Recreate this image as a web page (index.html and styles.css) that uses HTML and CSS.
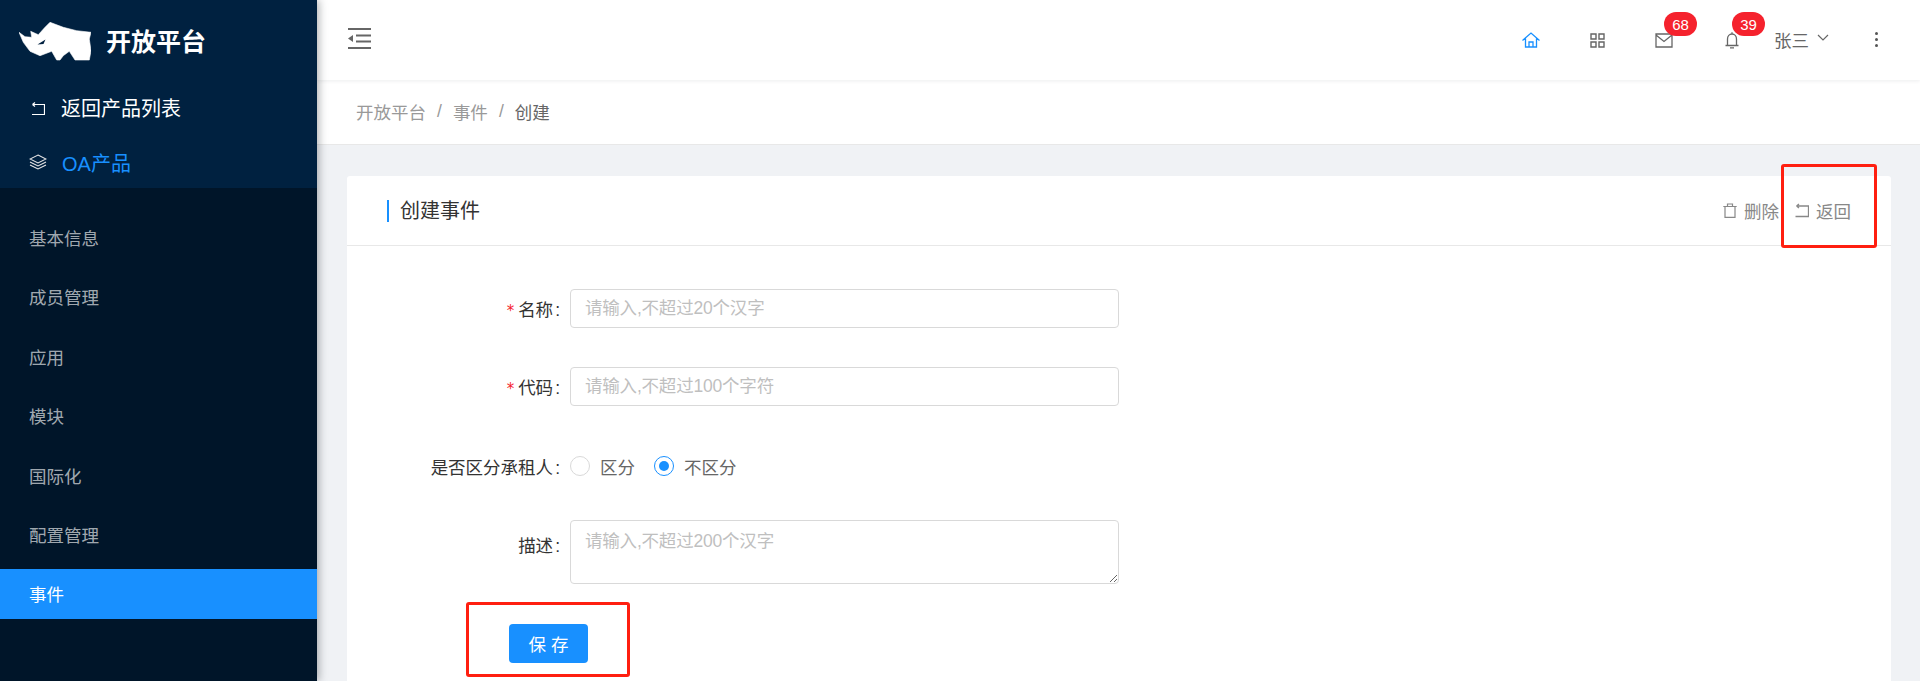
FILE: index.html
```html
<!DOCTYPE html>
<html lang="zh-CN">
<head>
<meta charset="utf-8">
<title>创建事件</title>
<link rel="stylesheet" href="styles.css">
</head>
<body>
<div class="app">
  <aside class="sider">
    <div class="sider-top">
      <div class="logo">
        <svg class="logo-img" viewBox="0 0 72 40"><path d="M0 10.300 L6 14.700 L12.700 15.300 L11.700 9.300 L19.300 12.700 L26 5.300 L31 .3 L44.300 5.300 L57.700 8.700 L72 10.300 L70.300 17 L72 28.700 L70.300 38 L56 38 L50.300 29.300 L44.300 33.700 L41 38 L37.700 38 L32.700 29.300 L21 33.700 L11 29.300 L4.300 20.300 Z" fill="#fff" stroke="#fff" stroke-width=".6" stroke-linejoin="round"/><path d="M18.500 22.500 L26.500 17.500 L24.500 22 Z" fill="#002140"/></svg>
        <span class="logo-text">开放平台</span>
      </div>
      <div class="back-row">
        <svg class="side-ico" viewBox="0 0 16 14"><path d="M3.500 2.500H15.500V12.500H3M3.500 2.500L6 .5M3.500 2.500L6 4.500" fill="none" stroke="#fff" stroke-width="1.200"/></svg>
        <span>返回产品列表</span>
      </div>
      <div class="product-row">
        <svg class="side-ico layers" viewBox="0 0 18 16"><path d="M9 1L17 5L9 9L1 5ZM1 8L9 12L17 8M1 11L9 15L17 11" fill="none" stroke="#e6e6e6" stroke-width="1.100"/></svg>
        <span>OA产品</span>
      </div>
    </div>
    <nav class="menu">
      <a class="menu-item">基本信息</a>
      <a class="menu-item">成员管理</a>
      <a class="menu-item">应用</a>
      <a class="menu-item">模块</a>
      <a class="menu-item">国际化</a>
      <a class="menu-item">配置管理</a>
      <a class="menu-item active">事件</a>
    </nav>
  </aside>
  <div class="main">
    <header class="header">
      <svg class="fold" viewBox="0 0 24 21"><path d="M0 1H23M8 7.500H23M8 13.500H23M0 20H23" stroke="#666" stroke-width="2" fill="none"/><path d="M0 10.500L5 7V14Z" fill="#666"/></svg>
      <div class="tools">
        <div class="tool t-home"><svg viewBox="0 0 18 16"><path d="M.5 8.500L9 1L17.500 8.500M3.500 6.500V15H14.500V6.500M7 15V10H11V15" fill="none" stroke="#1890ff" stroke-width="1.300"/></svg></div>
        <div class="tool t-apps"><svg viewBox="0 0 15 15"><path d="M1 1H6V6H1ZM9 1H14V6H9ZM1 9H6V14H1ZM9 9H14V14H9Z" fill="none" stroke="#666" stroke-width="1.400"/></svg></div>
        <div class="tool t-mail"><svg viewBox="0 0 18 15"><path d="M1 1H17V14H1ZM1 2L9 8.500L17 2" fill="none" stroke="#666" stroke-width="1.300"/></svg><span class="badge">68</span></div>
        <div class="tool t-bell"><svg viewBox="0 0 14 17"><path d="M.5 13.500H13.500M2.500 13.500V7C2.500 4 4.500 2 7 2C9.500 2 11.500 4 11.500 7V13.500M5 15.800H9M7 .3V2" fill="none" stroke="#666" stroke-width="1.300"/></svg><span class="badge">39</span></div>
        <div class="user"><span>张三</span><svg viewBox="0 0 12 7"><path d="M1 1L6 6L11 1" fill="none" stroke="#666" stroke-width="1.200"/></svg></div>
        <div class="more"><i></i><i></i><i></i></div>
      </div>
    </header>
    <div class="crumb">
      <span class="c-link">开放平台</span><span class="c-sep">/</span><span class="c-link">事件</span><span class="c-sep">/</span><span class="c-cur">创建</span>
    </div>
    <div class="content">
      <section class="card">
        <div class="card-head">
          <h2 class="card-title">创建事件</h2>
          <div class="actions">
            <span class="act"><svg viewBox="0 0 14 15"><path d="M.3 3.500H13.700M2 3.500V14.300H12V3.500M4.500 3.500V1H9.500V3.500" fill="none" stroke="#888" stroke-width="1.200"/></svg>删除</span>
            <span class="act"><svg viewBox="0 0 14 15"><path d="M1.500 3H13.500V13.500H.5M1.500 3L4 1M1.500 3L4 5" fill="none" stroke="#888" stroke-width="1.300"/></svg>返回</span>
          </div>
        </div>
        <form class="form">
          <div class="row r-name"><label class="lab req">名称</label><input class="inp" placeholder="请输入,不超过20个汉字"></div>
          <div class="row r-code"><label class="lab req">代码</label><input class="inp" placeholder="请输入,不超过100个字符"></div>
          <div class="row r-radio"><label class="lab">是否区分承租人</label>
            <div class="radios">
              <span class="radio"><i class="dot"></i>区分</span>
              <span class="radio on"><i class="dot"></i>不区分</span>
            </div>
          </div>
          <div class="row r-desc"><label class="lab">描述</label><textarea class="inp area" placeholder="请输入,不超过200个汉字"></textarea></div>
          <div class="submit"><button type="button" class="btn">保 存</button></div>
        </form>
        <div class="mark mark-back"></div>
        <div class="mark mark-save"></div>
      </section>
    </div>
  </div>
</div>
</body>
</html>
```
FILE: styles.css
```css
* { box-sizing: border-box; }
html, body { margin: 0; height: 681px; overflow: hidden; }
body { font-family: "Liberation Sans", "Noto Sans CJK SC", sans-serif; font-size: 16px; color: #333; background: #f0f2f5; }
.app { display: flex; height: 681px; }
.sider { width: 317px; flex: none; background: #001529; box-shadow: 2px 0 8px rgba(29,35,41,.35); position: relative; z-index: 2; }
.sider-top { height: 188px; background: #002140; }
.logo { height: 84px; display: flex; align-items: center; padding-left: 19px; }
.logo-img { width: 72px; height: 40px; margin-right: 15px; }
.logo-text { color: #fff; font-size: 25px; font-weight: 700; margin-top: -4px; }
.back-row, .product-row { display: flex; align-items: center; padding-left: 29px; font-size: 20px; line-height: 30px; }
.back-row { color: #fff; height: 50px; margin-top: 0; }
.product-row { color: #1890ff; height: 52px; margin-top: 4px; }
.side-ico { width: 16px; height: 14px; margin-right: 16px; flex: none; }
.layers { width: 18px; height: 16px; margin-right: 15px; margin-top: -4px; }
.menu { padding-top: 24.600px; display: flex; flex-direction: column; gap: 9.400px; }
.menu-item { display: flex; align-items: center; height: 50px; padding-left: 29px; font-size: 17.500px; color: rgba(255,255,255,.65); }
.menu-item.active { background: #1890ff; color: #fff; }
.main { flex: 1; min-width: 0; display: flex; flex-direction: column; min-height: 0; }
.header { flex: none; height: 80px; background: #fff; display: flex; align-items: center; justify-content: space-between; padding: 0 42px 0 31px; box-shadow: 0 1px 4px rgba(0,21,41,.08); position: relative; z-index: 1; }
.fold { width: 24px; height: 21px; margin-top: -3px; }
.tools { display: flex; align-items: center; height: 80px; }
.tool { position: relative; display: flex; justify-content: center; width: 40px; margin-top: 0; }
.t-home { margin-right: 26px; }
.t-home svg { width: 18px; height: 16px; }
.t-apps { margin-right: 27px; }
.t-apps svg { width: 15px; height: 15px; }
.t-mail { margin-right: 28px; }
.t-mail svg { width: 18px; height: 15px; }
.t-bell svg { width: 14px; height: 17px; }
.badge { position: absolute; left: 20px; top: -21px; min-width: 33px; height: 24px; line-height: 25px; border-radius: 12px; background: #f5222d; color: #fff; font-size: 15px; text-align: center; }
.t-bell .badge { top: -20px; }
.user { display: flex; align-items: center; color: #666; font-size: 17.500px; margin: -1px 0 0 22px; }
.user svg { width: 12px; height: 7px; margin: -5px 0 0 8px; }
.more { display: flex; flex-direction: column; gap: 3px; margin: -2px 0 0 46px; }
.more i { width: 3px; height: 3px; border-radius: 50%; background: #555; }
.crumb { flex: none; height: 65px; background: #fff; border-bottom: 1px solid #e8e8e8; display: flex; align-items: center; padding: 0 0 2px 39px; font-size: 17.500px; }
.c-link { color: #999; }
.c-sep { color: #999; margin: 0 11px; }
.c-cur { color: #666; }
.content { flex: 1; min-height: 0; overflow: hidden; padding: 31px 29px 0 30px; }
.card { position: relative; background: #fff; border-radius: 3px; height: 600px; }
.card-head { height: 70px; border-bottom: 1px solid #e8e8e8; display: flex; align-items: center; justify-content: space-between; padding: 0 40px 0 40px; }
.card-title { margin: 0; font-weight: 400; font-size: 20px; color: #333; border-left: 2px solid #1890ff; padding-left: 11px; line-height: 22px; }
.actions { display: flex; gap: 16px; }
.act { display: flex; align-items: center; color: #888; font-size: 17.500px; }
.act svg { width: 14px; height: 15px; margin-right: 7px; }
.form { padding-top: 43px; }
.row { display: flex; align-items: center; }
.lab { width: 223px; text-align: right; font-size: 17.500px; color: #333; flex: none; }
.lab::after { content: ":"; margin: 0 10px 0 2px; }
.req::before { content: "*"; color: #f5222d; margin-right: 4px; font-size: 15px; font-family: "DejaVu Sans", sans-serif; }
.inp { width: 549px; height: 39px; border: 1px solid #d9d9d9; border-radius: 4px; padding: 0 14px; font: 17.500px "Liberation Sans", "Noto Sans CJK SC", sans-serif; letter-spacing: -.2px; color: #333; outline: 0; background: #fff; }
.inp::placeholder { color: #bfbfbf; opacity: 1; }
.r-code { margin-top: 39px; }
.r-radio { margin-top: 40px; height: 40px; }
.r-desc { margin-top: 34px; }
.r-desc .lab { margin-bottom: 16px; }
.area { height: 64px; padding-top: 6px; resize: both; display: block; }
.radios { display: flex; gap: 19px; }
.radio { display: flex; align-items: center; color: #666; font-size: 17.500px; }
.dot { width: 20px; height: 20px; border-radius: 50%; border: 1px solid #d9d9d9; margin-right: 10px; position: relative; display: block; }
.on .dot { border-color: #1890ff; }
.on .dot::after { content: ""; position: absolute; left: 4px; top: 4px; width: 10px; height: 10px; border-radius: 50%; background: #1890ff; }
.submit { padding: 40px 0 0 162px; }
.btn { width: 79px; height: 39px; background: #1890ff; color: #fff; border: 0; border-radius: 4px; font: 17.500px "Liberation Sans", "Noto Sans CJK SC", sans-serif; padding: 0; }
.mark { position: absolute; border: 3px solid #ff1f10; border-radius: 3px; }
.mark-back { left: 1434px; top: -12px; width: 96px; height: 84px; }
.mark-save { left: 119px; top: 426px; width: 164px; height: 75px; }
```
